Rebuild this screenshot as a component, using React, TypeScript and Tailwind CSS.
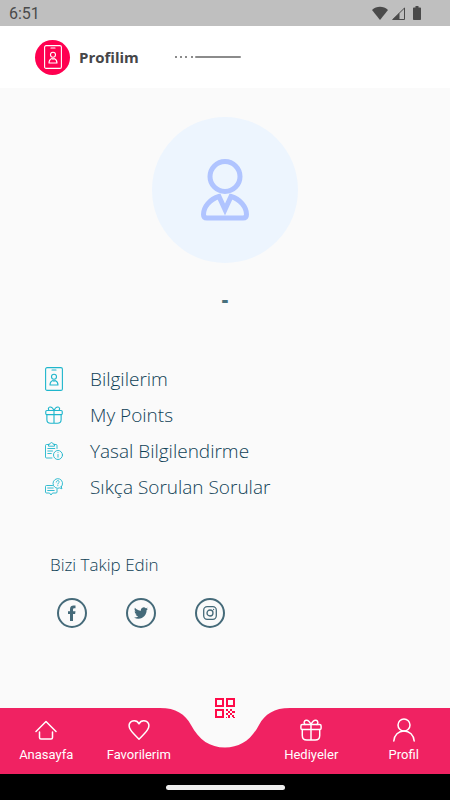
import type { ReactNode, SVGProps } from "react";

function Icon({ children, ...props }: SVGProps<SVGSVGElement>) {
  return (
    <svg
      fill="none"
      stroke="currentColor"
      strokeLinecap="round"
      strokeLinejoin="round"
      aria-hidden="true"
      {...props}
    >
      {children}
    </svg>
  );
}

function BadgeIcon({ className }: { className: string }) {
  return (
    <Icon viewBox="0 0 18 24" strokeWidth="1.1" className={className}>
      <rect x="0.6" y="0.6" width="16.8" height="22.8" rx="1.5" />
      <path d="M7 3h4" />
      <circle cx="9" cy="9.800" r="2.500" />
      <path d="M5 18c0-2.700 1.300-4 3-4.600l1 .9 1-.9c1.700.6 3 1.900 3 4.600z" />
    </Icon>
  );
}

function GiftIcon({ className, weight }: { className: string; weight: string }) {
  return (
    <Icon viewBox="0 0 24 24" strokeWidth={weight} className={className}>
      <rect x="1" y="6" width="22" height="5.500" rx="1.500" />
      <path d="M2.500 11.500v6.500c0 3 1.800 5 5 5h9c3.200 0 5-2 5-5v-6.500M12 6v17" />
      <path d="M12 6C10.500 2.500 8.500 1 6.500 1.300 4.200 1.800 4 4.500 5.500 6M12 6c1.500-3.500 3.500-5 5.500-4.700C19.800 1.800 20 4.500 18.500 6" />
    </Icon>
  );
}

function ClipboardInfoIcon() {
  return (
    <Icon viewBox="0 0 18 18" strokeWidth="0.9" className="size-[18px]">
      <path d="M3.500 2.500H1.500a1 1 0 0 0-1 1v11.500a1 1 0 0 0 1 1h5.500M9.500 2.500h1.500a1 1 0 0 1 1 1v3" />
      <path d="M3.500 3.800V2.200h1.500c0-2.200 3-2.200 3 0h1.500v1.600z" />
      <path d="M2.800 6.500h7M2.800 9h4.700M2.800 11.500h3.500" />
      <circle cx="13" cy="13" r="4.500" />
      <path d="M13 12.500v2.700M13 10.600v.1" />
    </Icon>
  );
}

function QuestionsIcon() {
  return (
    <Icon viewBox="0 0 18 18" strokeWidth="0.9" className="size-[18px]">
      <path d="M7.500 7.500h-6a1 1 0 0 0-1 1v5.500a1 1 0 0 0 1 1h3l1.500 2 1.500-2h3.500a1 1 0 0 0 1-1v-3" />
      <path d="M2.700 10h5.500M2.700 12.500h6.500" />
      <path d="M16.300 8.800l.6 2-2.200-.9A4.800 4.800 0 1 1 16.300 8.800z" />
      <path d="M11.300 4c0-1.900 2.900-1.900 2.900 0 0 1.100-1.400 1-1.400 2M12.800 7.600v.1" />
    </Icon>
  );
}

function QrIcon() {
  return (
    <svg viewBox="0 0 20 20" className="size-5" fill="currentColor" aria-hidden="true">
      <path
        fillRule="evenodd"
        d="M0 0h9v9H0zM2 2v5h5V2zM11 0h9v9h-9zM13 2v5h5V2zM0 11h9v9H0zM2 13v5h5v-5z"
      />
      <path d="M11 11h2v2h-2zM15 11h2v2h-2zM13 13h2v2h-2zM17 13h3v2h-3zM11 15h2v2h-2zM15 15h2v2h-2zM13 17h2v3h-2zM17 17h2v2h-2zM11 19h1v1h-1zM18 19h2v1h-2z" />
    </svg>
  );
}

function StatusBar() {
  return (
    <div className="flex h-[26px] items-center justify-between bg-[#bfbfbf] pl-[9px] pr-[29px] text-[#4a4a4a]">
      <span className="pt-0.5 font-['Roboto',sans-serif] text-base leading-5">6:51</span>
      <div className="flex items-center gap-1">
        <svg viewBox="0 0 16 14" className="h-[14px] w-4" fill="currentColor" aria-hidden="true">
          <path d="M8 14 0 4C4.500-.2 11.500-.2 16 4z" />
        </svg>
        <svg viewBox="0 0 13 13" className="size-[13px]" aria-hidden="true">
          <path d="M7 6.500V13H0z" fill="currentColor" />
          <path d="M.8 12.500H12.500V1zM7 6.500v6" fill="none" stroke="currentColor" />
        </svg>
        <svg viewBox="0 0 8 14" className="ml-1 h-[14px] w-2" fill="currentColor" aria-hidden="true">
          <path d="M2.500 0h3v1.500H7.200q.8 0 .8.800v10.900q0 .8-.8.800H.8q-.8 0-.8-.8V2.300q0-.8.8-.8H2.500z" />
        </svg>
      </div>
    </div>
  );
}

function Header() {
  return (
    <header className="flex h-[62px] items-center bg-white pl-[35px]">
      <span className="flex size-[35px] items-center justify-center rounded-full bg-[#ff0050] text-white">
        <BadgeIcon className="h-6 w-[18px]" />
      </span>
      <h1 className="ml-[9px] w-24 font-['Open_Sans',sans-serif] text-[15px] font-bold text-[#464648]">
        Profilim
      </h1>
      <svg viewBox="0 0 66 2" className="h-0.5 w-[66px]" fill="#8b8b8b" aria-hidden="true">
        <path d="M0 0h2v2H0zM5 0h2v2H5zM10 0h2v2h-2zM16 0h2v2h-2z" />
        <rect x="20" width="46" height="2" rx="1" />
      </svg>
    </header>
  );
}

function Avatar() {
  return (
    <div className="flex size-[146px] items-center justify-center rounded-full bg-[#edf5fe] text-[#b0c4ff]">
      <Icon viewBox="0 0 48 62" strokeWidth="5" className="h-[62px] w-12">
        <circle cx="24" cy="17.500" r="15" />
        <path
          d="M18 37.500 24 50.500 30 37.500C39 40 45.500 48 45.500 55.500Q45.500 59 42 59H6Q2.500 59 2.500 55.500C2.500 48 9 40 18 37.500Z"
          strokeLinejoin="miter"
        />
      </Icon>
    </div>
  );
}

const menu: { label: string; icon: ReactNode }[] = [
  { label: "Bilgilerim", icon: <BadgeIcon className="h-6 w-[18px]" /> },
  { label: "My Points", icon: <GiftIcon className="size-[18px]" weight="1.5" /> },
  { label: "Yasal Bilgilendirme", icon: <ClipboardInfoIcon /> },
  { label: "Sıkça Sorulan Sorular", icon: <QuestionsIcon /> },
];

const socials: { label: string; icon: ReactNode }[] = [
  {
    label: "Facebook",
    icon: (
      <svg viewBox="0 0 16 16" className="size-4" fill="currentColor" aria-hidden="true">
        <path d="M6 16V9H4V6.200h2V4.300C6 1.500 7.500.5 9.500.5h2v2.700h-1.400Q9 3.200 9 4.400v1.800h2.500L11.100 9H9v7z" />
      </svg>
    ),
  },
  {
    label: "Twitter",
    icon: (
      <svg viewBox="0 0 24 24" className="size-[14px]" fill="currentColor" aria-hidden="true">
        <path d="M23.950 4.570a10 10 0 0 1-2.820.770 4.960 4.960 0 0 0 2.160-2.720c-.950.550-2 .960-3.130 1.180a4.920 4.920 0 0 0-8.380 4.480C7.690 8.100 4.070 6.130 1.640 3.160a4.820 4.820 0 0 0-.660 2.480c0 1.710.870 3.210 2.190 4.100a4.900 4.900 0 0 1-2.230-.620v.060a4.920 4.920 0 0 0 3.950 4.830 5 5 0 0 1-2.210.080 4.940 4.940 0 0 0 4.600 3.420A9.870 9.870 0 0 1 0 19.540a13.990 13.990 0 0 0 7.550 2.210c9.050 0 14-7.500 14-13.980 0-.210 0-.420-.020-.630a9.940 9.940 0 0 0 2.420-2.570z" />
      </svg>
    ),
  },
  {
    label: "Instagram",
    icon: (
      <Icon viewBox="0 0 14 14" strokeWidth="1.300" className="size-[14px]">
        <rect x="0.7" y="0.7" width="12.600" height="12.600" rx="3.500" />
        <circle cx="7" cy="7" r="3" />
        <path d="M10.600 3.400v.1" />
      </Icon>
    ),
  },
];

function NavItem({ label, children }: { label: string; children: ReactNode }) {
  return (
    <a href="#" className="flex flex-1 flex-col items-center gap-1 pt-2">
      <span className="flex h-[27px] items-center">{children}</span>
      <span className="text-[13px] leading-4">{label}</span>
    </a>
  );
}

function BottomNav() {
  return (
    <nav className="relative flex h-[66px] bg-[#f02262] font-['Roboto',sans-serif] text-white">
      <svg
        viewBox="0 0 130 40"
        className="absolute left-1/2 top-0 h-10 w-[130px] -translate-x-1/2"
        fill="#fafafa"
        aria-hidden="true"
      >
        <path d="M0 0C16 0 25 6 31 17C39 32 50 39.500 65 39.500S91 32 99 17C105 6 114 0 130 0Z" />
      </svg>
      <div className="flex flex-1">
        <NavItem label="Anasayfa">
          <Icon viewBox="0 0 22 20" strokeWidth="1.500" className="h-5 w-[22px]">
            <path d="M1 11.500 11 1.500l10 10M4.500 12v5.500q0 1.500 1.500 1.500h10q1.500 0 1.500-1.500V12" />
          </Icon>
        </NavItem>
        <NavItem label="Favorilerim">
          <Icon viewBox="0 0 22 20" strokeWidth="1.500" className="h-5 w-[22px]">
            <path d="M11 3.800C9-.2 3.500 0 1.600 3.400-.3 7.500 3 11.500 11 19.200 19 11.500 22.300 7.500 20.400 3.400 18.500 0 13-.2 11 3.800z" />
          </Icon>
        </NavItem>
      </div>
      <div className="flex w-20 justify-center">
        <a
          href="#"
          aria-label="QR"
          className="relative -top-2.5 h-5 text-[#ff0a48]"
        >
          <QrIcon />
        </a>
      </div>
      <div className="flex flex-1">
        <NavItem label="Hediyeler">
          <GiftIcon className="size-[22px]" weight="1.600" />
        </NavItem>
        <NavItem label="Profil">
          <Icon viewBox="0 0 22 24" strokeWidth="1.500" className="h-6 w-[22px]">
            <circle cx="11" cy="7" r="6" />
            <path d="M.8 23C1.200 17 5.500 13 11 13s9.800 4 10.200 10" />
          </Icon>
        </NavItem>
      </div>
    </nav>
  );
}

export default function App() {
  return (
    <div className="flex min-h-screen flex-col bg-[#fafafa]">
      <StatusBar />
      <Header />
      <main className="flex-1 font-['Open_Sans',sans-serif] font-light text-[#0f4156]">
        <section className="flex flex-col items-center pt-[29px]">
          <Avatar />
          <p className="mt-[23px] text-xl leading-7 font-extrabold text-[#48707c]">-</p>
        </section>
        <ul className="mt-[47px] px-[45px]">
          {menu.map((item) => (
            <li key={item.label}>
              <a href="#" className="flex h-9 items-center text-[19px] leading-7">
                <span className="w-[45px] text-[#1fb6cc]">{item.icon}</span>
                {item.label}
              </a>
            </li>
          ))}
        </ul>
        <section className="px-[50px] pt-12">
          <h2 className="text-[17px] leading-6">Bizi Takip Edin</h2>
          <div className="mt-[21px] flex gap-[39px] pl-[7px]">
            {socials.map((social) => (
              <a
                key={social.label}
                href="#"
                aria-label={social.label}
                className="flex size-[30px] items-center justify-center rounded-full border-2 border-[#456a79] text-[#456a79]"
              >
                {social.icon}
              </a>
            ))}
          </div>
        </section>
      </main>
      <BottomNav />
      <div className="flex h-[26px] items-center justify-center bg-black">
        <div className="h-[5px] w-[119px] rounded-full bg-[#eeeeee]" />
      </div>
    </div>
  );
}
